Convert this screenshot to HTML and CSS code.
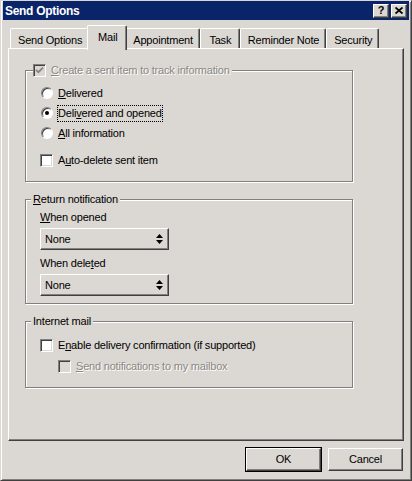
FILE: index.html
```html
<!DOCTYPE html>
<html>
<head>
<meta charset="utf-8">
<link rel="stylesheet" href="styles.css">
</head>
<body>
<div class="window">
  <div class="titlebar">
    <span class="title">Send Options</span>
    <div class="tbtns">
      <span class="tbtn">?</span>
      <span class="tbtn"><svg width="8" height="7" viewBox="0 0 8 7"><path d="M0.5 0.5 L7.5 6.5 M7.5 0.5 L0.5 6.5" stroke="#000" stroke-width="1.8"/></svg></span>
    </div>
  </div>

  <div class="tabs">
    <div class="tab">Send Options</div>
    <div class="tab active">Mail</div>
    <div class="tab">Appointment</div>
    <div class="tab">Task</div>
    <div class="tab">Reminder Note</div>
    <div class="tab">Security</div>
  </div>

  <div class="panel">
    <fieldset class="group">
      <legend class="legend legend-check">
        <span class="lg">
          <span class="cb disabled"><svg width="9" height="9" viewBox="0 0 9 9"><path d="M1 3.8 L3.4 6.2 L8 1.6" fill="none" stroke="#8a8783" stroke-width="1.9"/></svg></span>
          <span class="dis"><u>C</u>reate a sent item to track information</span>
        </span>
      </legend>
      <div class="gbody g1">
        <div class="row"><span class="radio"></span><span><u>D</u>elivered</span></div>
        <div class="row"><span class="radio on"></span><span class="focus">Deli<u>v</u>ered and opened</span></div>
        <div class="row"><span class="radio"></span><span><u>A</u>ll information</span></div>
        <div class="row spaced"><span class="cb"></span><span>A<u>u</u>to-delete sent item</span></div>
      </div>
    </fieldset>

    <fieldset class="group next">
      <legend class="legend"><u>R</u>eturn notification</legend>
      <div class="gbody g2">
        <div class="label"><u>W</u>hen opened</div>
        <div class="select"><span>None</span><svg width="7" height="10" viewBox="0 0 7 10"><path d="M3.5 0 L7 4 L0 4 Z M0 6 L7 6 L3.5 10 Z" fill="#000"/></svg></div>
        <div class="label second">When dele<u>t</u>ed</div>
        <div class="select"><span>None</span><svg width="7" height="10" viewBox="0 0 7 10"><path d="M3.5 0 L7 4 L0 4 Z M0 6 L7 6 L3.5 10 Z" fill="#000"/></svg></div>
      </div>
    </fieldset>

    <fieldset class="group next">
      <legend class="legend">Internet mail</legend>
      <div class="gbody g3">
        <div class="row"><span class="cb"></span><span>E<u>n</u>able delivery confirmation (if supported)</span></div>
        <div class="row sub"><span class="cb disabled"></span><span class="dis"><u>S</u>end notifications to my mailbox</span></div>
      </div>
    </fieldset>
  </div>

  <div class="buttons">
    <button class="btn default">OK</button>
    <button class="btn">Cancel</button>
  </div>
</div>
</body>
</html>
```

FILE: styles.css
```css
* { box-sizing: border-box; }

html, body {
  margin: 0;
  padding: 0;
  background: #dbd7d2;
}

body {
  font-family: "Liberation Sans", Arial, sans-serif;
  font-size: 11px;
  line-height: 13px;
  letter-spacing: -0.2px;
  color: #000;
}

.window {
  width: 412px;
  height: 481px;
  border: 1px solid;
  border-color: #dbd7d2 #404040 #404040 #dbd7d2;
  box-shadow: inset 1px 1px #fff, inset -1px -1px #808080;
  padding: 0 2px;
  background: #dbd7d2;
  display: flex;
  flex-direction: column;
}

/* Title bar */
.titlebar {
  height: 19px;
  flex: none;
  background: #0a246a;
  color: #fff;
  display: flex;
  align-items: center;
  justify-content: space-between;
  padding: 0 2px 0 2px;
}

.title {
  font-weight: bold;
  font-size: 12px;
  letter-spacing: -0.3px;
  padding-top: 2px;
}

.tbtns {
  display: flex;
  gap: 2px;
}

.tbtn {
  width: 16px;
  height: 14px;
  background: #dbd7d2;
  border: 1px solid;
  border-color: #fff #404040 #404040 #fff;
  box-shadow: inset -1px -1px #808080;
  display: flex;
  align-items: center;
  justify-content: center;
  color: #000;
  font-weight: bold;
  font-size: 11px;
  letter-spacing: 0;
}

/* Tabs */
.tabs {
  flex: none;
  display: flex;
  align-items: flex-end;
  height: 23px;
  margin: 5px 5px 0;
  padding-left: 2px;
}

.tab {
  flex: none;
  height: 20px;
  min-width: 40px;
  padding: 5px 6px 0 7px;
  border: 1px solid;
  border-bottom: none;
  border-color: #fff #404040 #fff #fff;
  box-shadow: inset -1px 0 #808080;
  border-radius: 2px 2px 0 0;
  text-align: center;
  white-space: nowrap;
  background: #dbd7d2;
}

.tab.active {
  height: 25px;
  margin: 0 -2px -2px;
  position: relative;
  z-index: 1;
}

/* Panel */
.panel {
  flex: none;
  height: 393px;
  margin: 0 5px;
  border: 1px solid;
  border-color: #fff #404040 #404040 #fff;
  box-shadow: inset -1px -1px #808080;
  padding: 15px 0 0 16px;
}

.group {
  width: 328px;
  margin: 0;
  padding: 0;
  border: 1px solid #808080;
  box-shadow: inset 1px 1px #fff, 1px 1px #fff;
  min-width: 0;
}

.group.next {
  margin-top: 11px;
}

.legend {
  margin-left: 5px;
  padding: 0 2px;
  background: #dbd7d2;
  line-height: 13px;
  height: 13px;
}

.legend-check {
  margin-left: 7px;
  padding: 0 2px 0 0;
}

.lg {
  display: flex;
  align-items: center;
  gap: 5px;
  height: 13px;
}

.gbody {
  padding-left: 14px;
}

.g1 { padding-top: 6px; padding-bottom: 11px; }
.g2 { padding-top: 4px; padding-bottom: 7px; }
.g3 { padding-top: 7px; padding-bottom: 11px; }

.row {
  display: flex;
  align-items: center;
  gap: 5px;
  height: 20px;
  white-space: nowrap;
}

.row.spaced { margin-top: 7px; }
.row.sub { margin-top: 1px; padding-left: 18px; }

/* Radio */
.radio {
  width: 12px;
  height: 12px;
  margin-left: 1px;
  border-radius: 50%;
  background: #fff;
  border: 1px solid;
  border-color: #808080 #fff #fff #808080;
  box-shadow: inset 1px 1px #404040;
  display: flex;
  align-items: center;
  justify-content: center;
  flex: none;
}

.radio.on::after {
  content: "";
  width: 4px;
  height: 4px;
  border-radius: 50%;
  background: #000;
}

/* Checkbox */
.cb {
  width: 13px;
  height: 13px;
  flex: none;
  background: #fff;
  border: 1px solid;
  border-color: #808080 #fff #fff #808080;
  box-shadow: inset 1px 1px #404040, inset -1px -1px #dbd7d2;
  display: flex;
  align-items: center;
  justify-content: center;
}

.cb.disabled {
  background: #dbd7d2;
}

.dis {
  color: #8a8783;
  text-shadow: 1px 1px 0 #fff;
}

.focus {
  border: 1px dotted #000;
  padding: 1px 0;
  margin-left: -1px;
}

/* Labels & selects */
.label {
  height: 15px;
  padding-top: 1px;
}

.label.second {
  margin-top: 6px;
}

.select {
  width: 129px;
  height: 22px;
  margin-top: 3px;
  border: 1px solid;
  border-color: #fff #404040 #404040 #fff;
  box-shadow: inset -1px -1px #808080;
  display: flex;
  align-items: center;
  justify-content: space-between;
  padding: 0 5px 0 4px;
}

/* Buttons */
.buttons {
  flex: none;
  display: flex;
  justify-content: flex-end;
  gap: 7px;
  margin: 7px 6px 0 0;
}

.btn {
  width: 75px;
  height: 23px;
  padding: 0;
  font: inherit;
  letter-spacing: inherit;
  color: #000;
  background: #dbd7d2;
  border: 1px solid;
  border-color: #fff #404040 #404040 #fff;
  box-shadow: inset -1px -1px #808080;
}

.btn.default {
  outline: 1px solid #000;
}
```
